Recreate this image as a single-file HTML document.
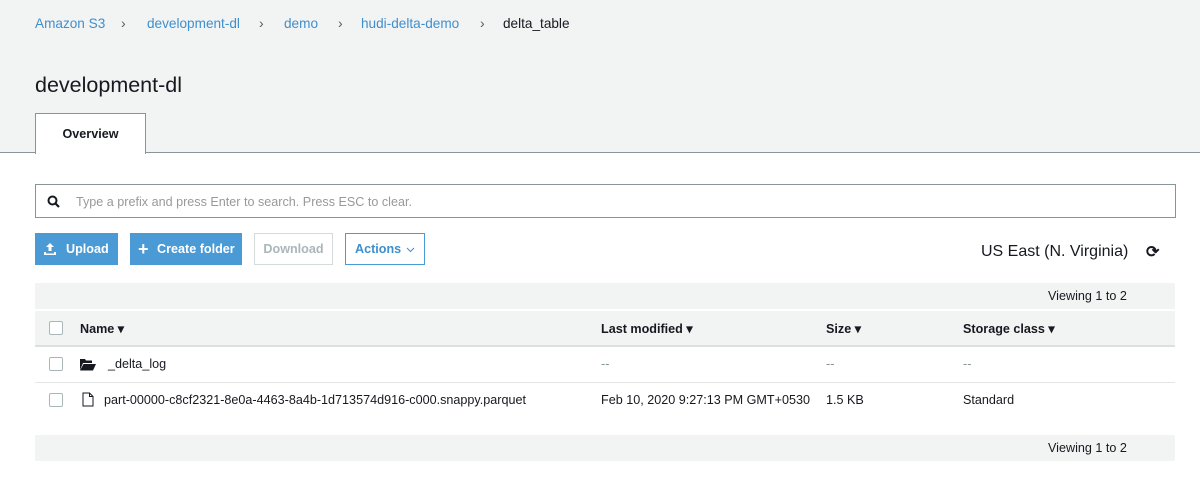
<!DOCTYPE html>
<html><head><meta charset="utf-8"><style>
*{margin:0;padding:0;box-sizing:border-box}
body{width:1200px;height:478px;background:#fff;font-family:"Liberation Sans",Arial,sans-serif;color:#16191f;position:relative;overflow:hidden;font-size:13px}
.hdr{position:absolute;left:0;top:0;width:1200px;height:153px;background:#f2f3f3;border-bottom:1px solid #879596}
.bc{position:absolute;top:16px;font-size:13.6px;color:#3f8fcd}
.sep{position:absolute;top:15px;font-size:14px;color:#545b64}
h1{position:absolute;left:35px;top:73px;font-size:21.5px;font-weight:normal;color:#16191f}
.tab{position:absolute;left:35px;top:113px;width:111px;height:41px;background:#fff;border:1px solid #879596;border-bottom:none;text-align:center;line-height:40px;font-weight:bold;font-size:12.6px}
.search{position:absolute;left:35px;top:184px;width:1141px;height:34px;border:1px solid #879596;background:#fff}
.search span{position:absolute;left:40px;top:10px;color:#999;font-size:12.6px}
.btn{position:absolute;top:233px;height:32px;line-height:32px;font-size:12.6px;font-weight:bold}
.blue{background:#4a9ad6;color:#fff}
.bar{position:absolute;left:35px;width:1140px;background:#f2f3f3}
.row{position:absolute;left:35px;width:1140px;height:36px;border-bottom:1px solid #e4e6e6}
.cb{position:absolute;left:14px;width:14px;height:14px;border:1px solid #aab7b8;border-radius:2px;background:#fff}
.t{position:absolute;font-size:12.6px}
</style></head><body>
<div class="hdr">
<span class="bc" style="left:35px">Amazon S3</span><span class="sep" style="left:121px">›</span>
<span class="bc" style="left:147px">development-dl</span><span class="sep" style="left:259px">›</span>
<span class="bc" style="left:284px">demo</span><span class="sep" style="left:338px">›</span>
<span class="bc" style="left:361px">hudi-delta-demo</span><span class="sep" style="left:480px">›</span>
<span class="bc" style="left:503px;color:#16191f">delta_table</span>
<h1>development-dl</h1>
<div class="tab">Overview</div>
</div>
<div class="search"><svg style="position:absolute;left:11px;top:10px" width="13" height="13" viewBox="0 0 13 13"><circle cx="5.5" cy="5.5" r="4" fill="none" stroke="#16191f" stroke-width="2"/><path d="M8.5 8.5L12 12" stroke="#16191f" stroke-width="2.2"/></svg><span>Type a prefix and press Enter to search. Press ESC to clear.</span></div>
<div class="btn blue" style="left:35px;width:83px"><svg style="position:absolute;left:8px;top:9px" width="14" height="14" viewBox="0 0 14 14"><path d="M7 1L3 5h2.5v4h3V5H11z M1 10v3h12v-3h-2v1.5H3V10z" fill="#fff"/></svg><span style="position:absolute;left:31px">Upload</span></div>
<div class="btn blue" style="left:130px;width:112px"><span style="position:absolute;left:8px;font-size:18px">+</span><span style="position:absolute;left:27px">Create folder</span></div>
<div class="btn" style="left:254px;width:79px;border:1px solid #d5dbdb;color:#aab7b8;font-weight:bold;text-align:center;line-height:30px">Download</div>
<div class="btn" style="left:345px;width:80px;border:1px solid #4a9ad6;color:#3f8fcd;line-height:30px"><span style="position:absolute;left:9px">Actions</span><svg style="position:absolute;left:60px;top:13px" width="9" height="6" viewBox="0 0 9 6"><path d="M1 1l3.5 3.5L8 1" fill="none" stroke="#3f8fcd" stroke-width="1"/></svg></div>
<div class="t" style="left:981px;top:243px;font-size:16px">US East (N. Virginia)</div>
<div class="t" style="left:1146px;top:242px;font-size:16px;font-weight:bold">⟳</div>
<div class="bar" style="top:283px;height:26px"><span class="t" style="left:1013px;top:6px">Viewing 1 to 2</span></div>
<div class="bar" style="top:311px;height:36px;border-bottom:2px solid #dcdfdf">
<div class="cb" style="top:10px;left:14px"></div>
<span class="t" style="left:45px;top:10px;font-weight:bold">Name ▾</span>
<span class="t" style="left:566px;top:10px;font-weight:bold">Last modified ▾</span>
<span class="t" style="left:791px;top:10px;font-weight:bold">Size ▾</span>
<span class="t" style="left:928px;top:10px;font-weight:bold">Storage class ▾</span>
</div>
<div class="row" style="top:347px">
<div class="cb" style="top:10px"></div>
<svg style="position:absolute;left:45px;top:11px" width="16" height="13" viewBox="0 0 16 13"><path d="M0 1h5l1 1.5h6V5H3L0 12z M3.5 6H16l-3 6.5H0z" fill="#16191f"/></svg>
<span class="t" style="left:73px;top:10px">_delta_log</span>
<span class="t" style="left:566px;top:10px;color:#879596">--</span>
<span class="t" style="left:791px;top:10px;color:#879596">--</span>
<span class="t" style="left:928px;top:10px;color:#879596">--</span>
</div>
<div class="row" style="top:383px;border-bottom:none">
<div class="cb" style="top:10px"></div>
<svg style="position:absolute;left:47px;top:9px" width="12" height="15" viewBox="0 0 12 15"><path d="M1 1h6.5L11 4.5V14H1z M7.5 1v3.5H11" fill="none" stroke="#16191f" stroke-width="1"/></svg>
<span class="t" style="left:69px;top:10px">part-00000-c8cf2321-8e0a-4463-8a4b-1d713574d916-c000.snappy.parquet</span>
<span class="t" style="left:566px;top:10px">Feb 10, 2020 9:27:13 PM GMT+0530</span>
<span class="t" style="left:791px;top:10px">1.5 KB</span>
<span class="t" style="left:928px;top:10px">Standard</span>
</div>
<div class="bar" style="top:435px;height:26px"><span class="t" style="left:1013px;top:6px">Viewing 1 to 2</span></div>
</body></html>
